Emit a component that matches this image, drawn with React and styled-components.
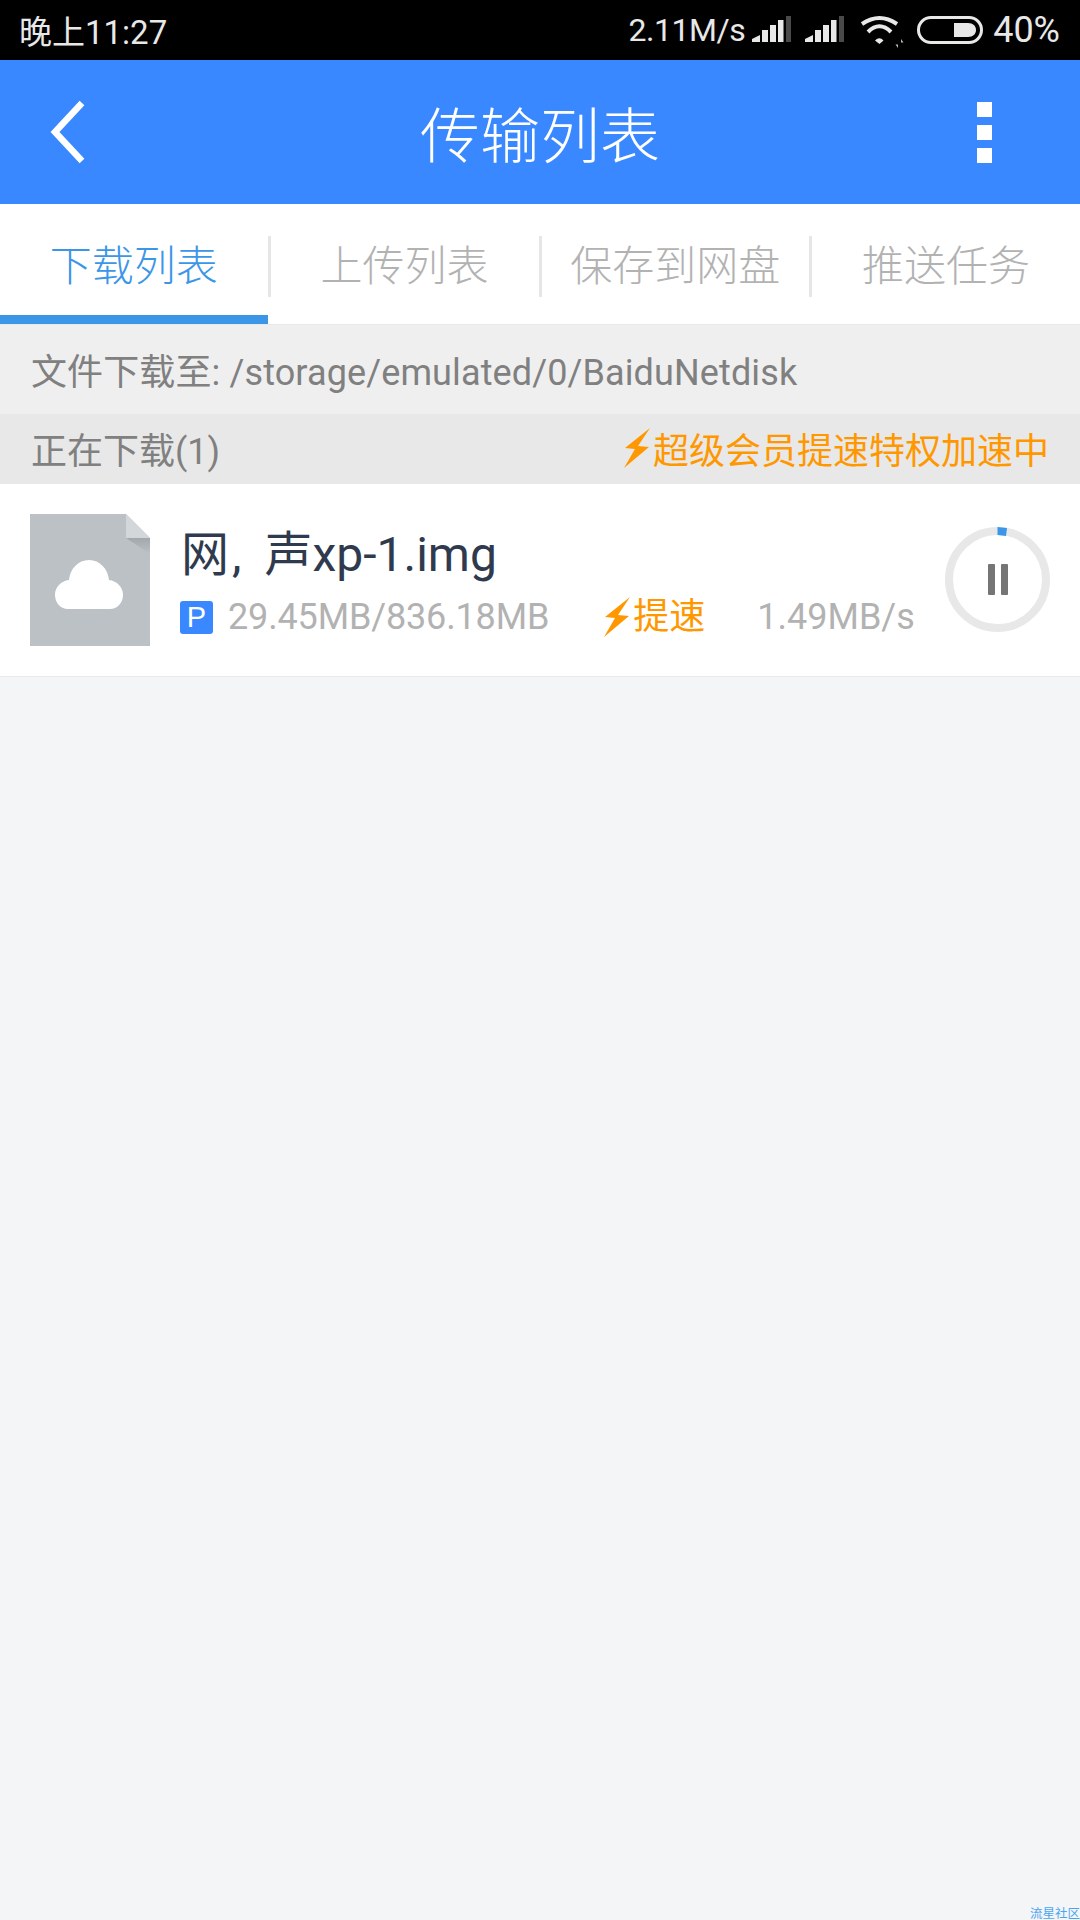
import React from "react";
import styled, { createGlobalStyle } from "styled-components";

const GlobalStyle = createGlobalStyle`
  html, body {
    margin: 0;
    padding: 0;
    background: #f4f5f7;
  }
  * {
    box-sizing: border-box;
  }
`;

const Page = styled.div`
  position: relative;
  width: 1080px;
  height: 1920px;
  overflow: hidden;
  display: flex;
  flex-direction: column;
  background: #f4f5f7;
  font-family: Roboto, "Noto Sans CJK SC", sans-serif;
`;

const StatusBar = styled.div`
  height: 60px;
  flex: none;
  display: flex;
  align-items: center;
  justify-content: space-between;
  padding: 0 20px 0 19px;
  background: #000;
  color: #e8e8e8;
  font-size: 33px;
`;

const StatusRight = styled.div`
  display: flex;
  align-items: center;
`;

const NetSpeed = styled.span`
  font-size: 32px;
  letter-spacing: -0.5px;
`;

const BatteryLevel = styled.span`
  margin-left: 10px;
  font-size: 36px;
`;

const StatusIcon = styled.svg`
  display: block;
  flex: none;
  overflow: visible;
  margin-left: ${(p) => p.$gap}px;
`;

const Header = styled.header`
  height: 144px;
  flex: none;
  display: grid;
  grid-template-columns: 1fr auto 1fr;
  align-items: center;
  padding: 0 88px;
  background: #3a88ff;
  color: #fff;
`;

const BackIcon = styled.svg`
  display: block;
  margin-left: -40px;
`;

const Title = styled.h1`
  margin: 0;
  padding-top: 12px;
  font-size: 60px;
  font-weight: 300;
  line-height: 1;
`;

const MenuDots = styled.div`
  justify-self: end;
  display: flex;
  flex-direction: column;
  gap: 8px;
`;

const Dot = styled.span`
  display: block;
  width: 15px;
  height: 15px;
  background: #fff;
`;

const TabBar = styled.nav`
  height: 120px;
  flex: none;
  display: flex;
  background: #fff;
`;

const Tab = styled.div`
  flex: 1;
  display: flex;
  align-items: center;
  justify-content: center;
  padding-top: 5px;
  font-size: 42px;
  font-weight: 300;
  color: ${(p) => (p.$active ? "#3b96e8" : "#b2b2b2")};
  border-bottom: 9px solid ${(p) => (p.$active ? "#3b96e8" : "transparent")};
`;

const TabDivider = styled.span`
  flex: none;
  width: 3px;
  height: 61px;
  margin-top: 32px;
  background: #e6e6e6;
`;

const PathRow = styled.div`
  height: 90px;
  flex: none;
  display: flex;
  align-items: center;
  padding: 0 31px 2px;
  background: #efefef;
  border-top: 1px solid #e9e9e9;
  color: #808080;
  font-size: 36px;
  letter-spacing: 0.12px;
`;

const SectionRow = styled.div`
  height: 70px;
  flex: none;
  display: flex;
  align-items: center;
  justify-content: space-between;
  padding: 0 31px 2px;
  background: #e8e8e8;
  color: #808080;
  font-size: 36px;
`;

const Boost = styled.span`
  display: flex;
  align-items: center;
  color: #ff9800;
  font-size: 36px;
`;

const TaskRow = styled.div`
  height: 193px;
  flex: none;
  display: flex;
  align-items: center;
  padding: 0 30px 1px;
  background: #fff;
  border-bottom: 1px solid #e9eaec;
`;

const Thumb = styled.svg`
  display: block;
  flex: none;
  margin-right: 30px;
`;

const TaskInfo = styled.div`
  flex: 1;
  min-width: 0;
  display: flex;
  flex-direction: column;
  gap: 12px;
  padding-top: 3px;
`;

const FileName = styled.div`
  font-size: 48px;
  line-height: 60px;
  color: #2f3a4e;
  padding-left: 1px;
`;

const NameComma = styled.span`
  margin: 0 23px 0 3px;
`;

const MetaRow = styled.div`
  display: flex;
  align-items: center;
  color: #b2b2b2;
  font-size: 36px;
  line-height: 40px;
`;

const PBadge = styled.span`
  flex: none;
  width: 33px;
  height: 33px;
  margin-right: 15px;
  display: flex;
  align-items: center;
  justify-content: center;
  border-radius: 3px;
  background: #3a88ff;
  color: #fff;
  font-family: "Liberation Sans", sans-serif;
  font-size: 29px;
`;

const SizeText = styled.span`
  letter-spacing: -0.15px;
`;

const Speed = styled.span`
  margin-left: 52px;
`;

const BoostWrap = styled.span`
  margin-left: 55px;
`;

const Watermark = styled.div`
  position: absolute;
  left: 1030px;
  bottom: 0;
  font-size: 12.5px;
  line-height: 13px;
  white-space: nowrap;
  color: #4aa5f0;
`;

const BoltIcon = styled.svg`
  display: block;
  flex: none;
  margin-right: 3px;
`;

const RingIcon = styled.svg`
  display: block;
  flex: none;
`;

const Bolt = () => (
  <BoltIcon width="26" height="40" viewBox="0 0 26 40">
    <polygon points="26,0 1,20 11,21 0,40 25,19 14,18" fill="#ff9800" />
  </BoltIcon>
);

const Signal = ({ gap }) => (
  <StatusIcon $gap={gap} width="39" height="30" viewBox="0 0 39 30">
    <path d="M0 27V24L8 20V27Z" fill="#e8e8e8" />
    <rect x="10" y="15" width="6" height="12" fill="#e8e8e8" />
    <rect x="18" y="10" width="6" height="17" fill="#e8e8e8" />
    <rect x="26" y="5" width="5.500" height="22" fill="#e8e8e8" />
    <rect x="34" y="1" width="5" height="26" fill="#4a4a4a" />
  </StatusIcon>
);

const Wifi = () => (
  <StatusIcon $gap={15} width="41" height="30" viewBox="0 0 41 30">
    <g fill="none" stroke="#e8e8e8" strokeWidth="4">
      <path d="M3 9Q20.500 -3 38 9" />
      <path d="M9 17Q20.500 5.500 32 17" />
    </g>
    <path d="M16 25.500Q20.500 21 24.500 25.500L20.500 29Z" fill="#e8e8e8" />
    <path d="M39 24V33L36.500 29.500H39M42 33V24L44.500 27.500H42" fill="#bbb" />
  </StatusIcon>
);

const Battery = () => (
  <StatusIcon $gap={17} width="66" height="30" viewBox="0 0 66 30">
    <rect x="1.500" y="2.500" width="63" height="25" rx="12.500" fill="none" stroke="#e8e8e8" strokeWidth="3" />
    <path d="M37 8H51C56 8 59 11 59 15C59 19 56 22 51 22H37Z" fill="#e8e8e8" />
  </StatusIcon>
);

const FileThumb = () => (
  <Thumb width="120" height="132" viewBox="0 0 120 132">
    <defs>
      <linearGradient id="fold" x1="0" y1="0" x2="0" y2="1">
        <stop offset="0" stopColor="#a2a7ad" />
        <stop offset="1" stopColor="#bcc1c6" />
      </linearGradient>
    </defs>
    <path d="M0 0H96L120 24V132H0Z" fill="#bcc1c6" />
    <path d="M96 24H120V40Z" fill="url(#fold)" />
    <path d="M96 0L120 24H96Z" fill="#d3d7da" />
    <path
      d="M38 95C30 95 25 88 25 81C25 73 31 67 39 66C40 55 48 46 59 46C70 46 78 55 79 66C87 67 93 73 93 81C93 89 87 95 80 95Z"
      fill="#fff"
    />
  </Thumb>
);

const ProgressRing = () => (
  <RingIcon width="105" height="105" viewBox="0 0 105 105">
    <circle cx="52.500" cy="52.500" r="48.500" fill="none" stroke="#e8e8e8" strokeWidth="8" />
    <path d="M52.500 0V8L61 9L62 1Z" fill="#3b96e8" />
    <rect x="43" y="37" width="7" height="31" rx="1" fill="#757575" />
    <rect x="56" y="37" width="7" height="31" rx="1" fill="#757575" />
  </RingIcon>
);

const tabs = ["下载列表", "上传列表", "保存到网盘", "推送任务"];

export default function App() {
  return (
    <Page>
      <GlobalStyle />
      <StatusBar>
        <span>晚上11:27</span>
        <StatusRight>
          <NetSpeed>2.11M/s</NetSpeed>
          <Signal gap={7} />
          <Signal gap={14} />
          <Wifi />
          <Battery />
          <BatteryLevel>40%</BatteryLevel>
        </StatusRight>
      </StatusBar>

      <Header>
        <BackIcon width="40" height="66" viewBox="0 0 40 66">
          <path d="M34 4L7 33L34 62" fill="none" stroke="#fff" strokeWidth="6.500" />
        </BackIcon>
        <Title>传输列表</Title>
        <MenuDots>
          <Dot />
          <Dot />
          <Dot />
        </MenuDots>
      </Header>

      <TabBar>
        {tabs.map((t, i) => (
          <React.Fragment key={t}>
            {i > 0 && <TabDivider />}
            <Tab $active={i === 0}>{t}</Tab>
          </React.Fragment>
        ))}
      </TabBar>

      <PathRow>文件下载至: /storage/emulated/0/BaiduNetdisk</PathRow>

      <SectionRow>
        <span>正在下载(1)</span>
        <Boost>
          <Bolt />
          超级会员提速特权加速中
        </Boost>
      </SectionRow>

      <TaskRow>
        <FileThumb />
        <TaskInfo>
          <FileName>
            网<NameComma>,</NameComma>声xp-1.img
          </FileName>
          <MetaRow>
            <PBadge>P</PBadge>
            <SizeText>29.45MB/836.18MB</SizeText>
            <BoostWrap>
              <Boost>
                <Bolt />
                提速
              </Boost>
            </BoostWrap>
            <Speed>1.49MB/s</Speed>
          </MetaRow>
        </TaskInfo>
        <ProgressRing />
      </TaskRow>

      <Watermark>流星社区</Watermark>
    </Page>
  );
}
